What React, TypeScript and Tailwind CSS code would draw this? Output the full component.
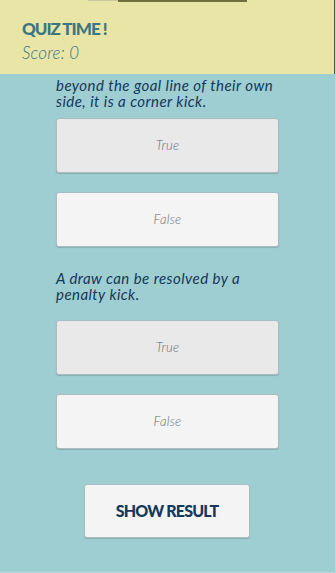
import React from "react";

function Choice({ label, shade }: { label: string; shade: "dark" | "light" }) {
  return (
    <button
      className={`w-[223px] h-[55px] rounded-[3px] border border-[#a9bcbf] shadow-[0_1px_1px_rgba(0,0,0,0.15)] flex items-center justify-center italic font-light text-[13px] tracking-[0.02em] text-[#646e78] ${
        shade === "dark" ? "bg-[#e9e9e9]" : "bg-[#f4f4f4]"
      }`}
      style={{ fontFamily: "Lato, 'Noto Sans', sans-serif" }}
    >
      {label}
    </button>
  );
}

export default function App() {
  return (
    <div
      className="w-[336px] h-[573px] bg-[#9ecdd2] flex flex-col overflow-hidden border-r border-b border-[#b4dcdf]"
      style={{ fontFamily: "Lato, 'Noto Sans', sans-serif" }}
    >
      <header className="h-[74px] shrink-0 bg-[#e8e5a7] flex flex-col pl-[22px] pt-[19px] border-r border-[#55543a] relative">
        <div className="absolute top-0 left-[88px] w-[30px] h-px bg-[#c9c7a0]" />
        <div className="absolute top-0 left-[118px] w-[129px] h-[2px] bg-[#6f6e3c]" />
        <div className="text-[17px] leading-[20px] font-black tracking-[-0.06em] text-[#3c7781]">QUIZ TIME !</div>
        <div className="mt-[4px] text-[17px] leading-[20px] italic font-light tracking-[0.01em] text-[#3c7781]">Score: 0</div>
      </header>
      <main className="flex flex-col pl-[56px] pt-[3px]">
        <p className="w-[222px] text-[15px] leading-[16px] italic tracking-[0.03em] text-[#14385a]">
          beyond the goal line of their own side, it is a corner kick.
        </p>
        <div className="mt-[9px] flex flex-col gap-[19px]">
          <Choice label="True" shade="dark" />
          <Choice label="False" shade="light" />
        </div>
        <p className="mt-[23px] w-[222px] text-[15px] leading-[16px] italic tracking-[0.03em] text-[#14385a]">
          A draw can be resolved by a penalty kick.
        </p>
        <div className="mt-[18px] flex flex-col gap-[19px]">
          <Choice label="True" shade="dark" />
          <Choice label="False" shade="light" />
        </div>
        <button className="mt-[35px] ml-[28px] w-[166px] h-[54px] rounded-[3px] border border-[#a9bcbf] bg-[#f4f4f4] shadow-[0_1px_1px_rgba(0,0,0,0.15)] flex items-center justify-center text-[16px] font-black tracking-[-0.05em] text-[#14385a]">
          SHOW RESULT
        </button>
      </main>
    </div>
  );
}
